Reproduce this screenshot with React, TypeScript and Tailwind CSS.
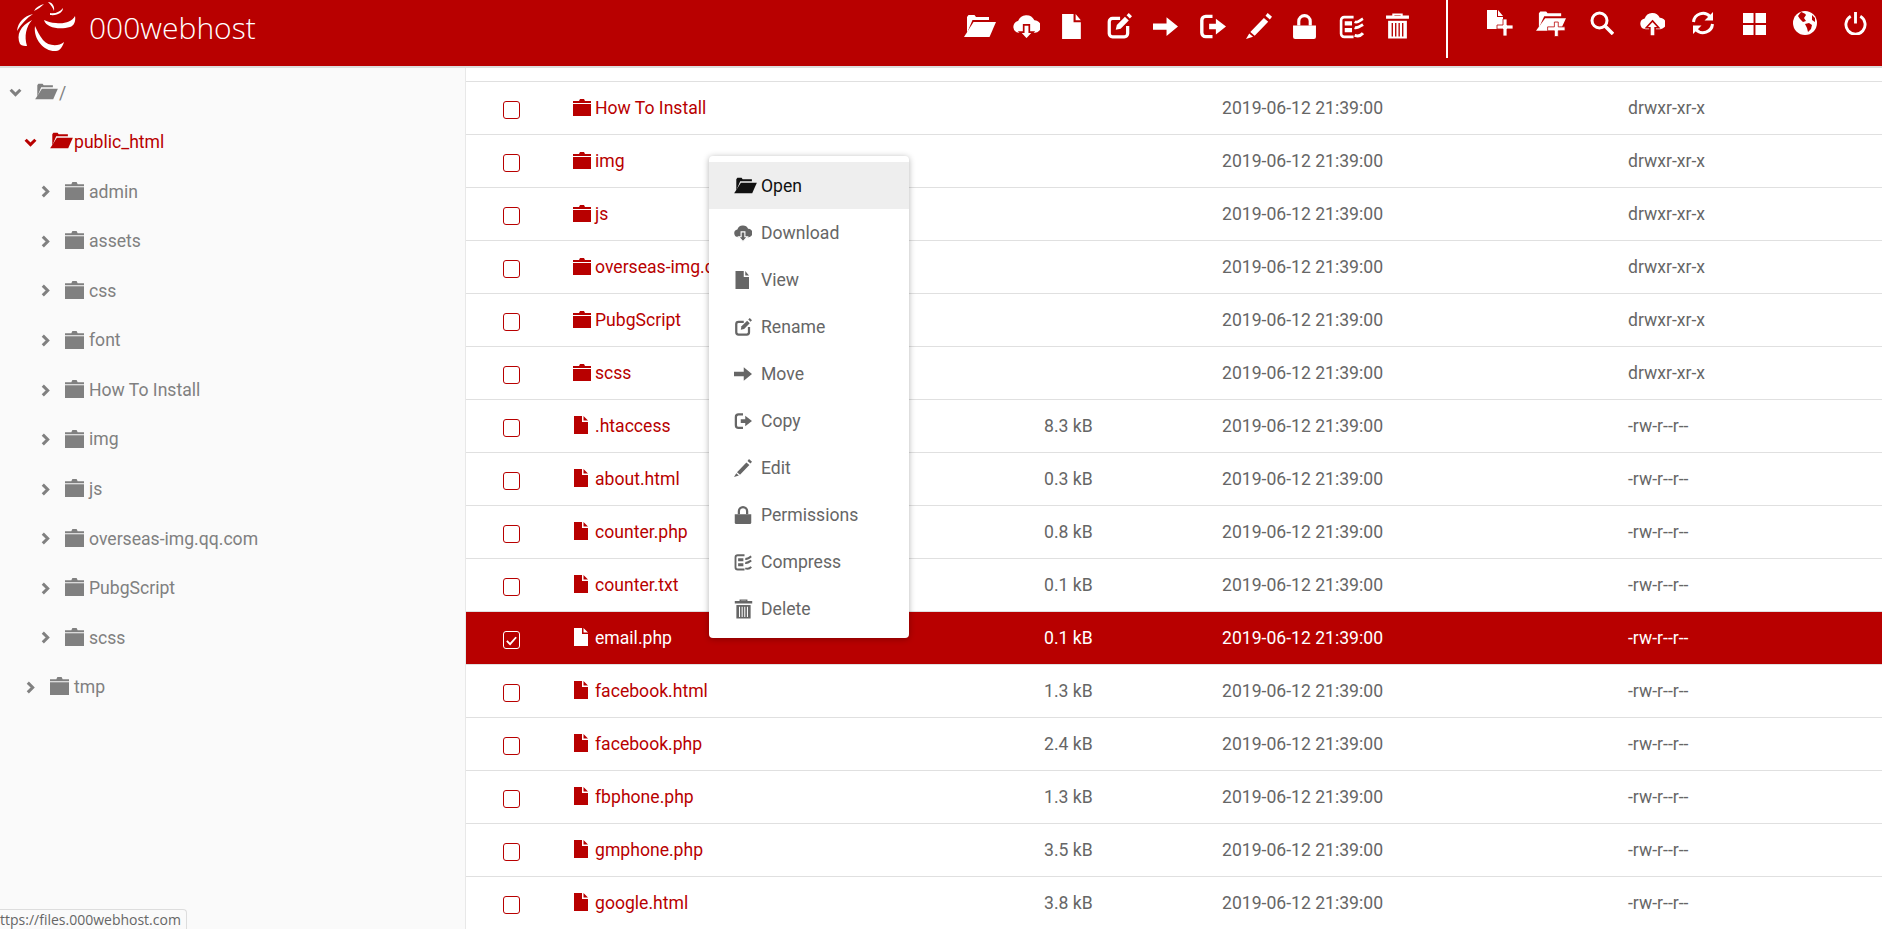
import React from "react";

const RED = "#b80000";

type IconName =
  | "folderOpen" | "cloudDown" | "file" | "edit" | "arrow" | "logout" | "pencil" | "lock" | "compress" | "trash"
  | "filePlus" | "folderPlus" | "search" | "cloudUp" | "refresh" | "grid" | "globe" | "power";

const CLOUD = "M5.500 17.500a5.200 5.200 0 0 1-1-10.300A7.800 7.800 0 0 1 19 6.500a5.500 5.500 0 0 1 .5 11z";

function Glyph({ name, cut }: { name: IconName; cut: string }) {
  switch (name) {
    case "folderOpen":
      return (
        <>
          <path d="M3 3 4.5 1h6L12 3h13v3H8.5L3 19z" fill="currentColor" />
          <path d="M9.5 8H32l-6.5 15H0z" fill="currentColor" />
        </>
      );
    case "cloudDown":
      return (
        <>
          <path d={CLOUD} fill="currentColor" />
          <path d="M9.500 10.500h5v6.500h3.500L12 23.500 6 17h3.500z" fill="currentColor" stroke={cut} strokeWidth="1.500" />
        </>
      );
    case "file":
      return <path d="M2 0h11v8h7v16H2zM15 0l5 6h-5z" fill="currentColor" />;
    case "edit":
      return (
        <>
          <path d="M13 5H6a3 3 0 0 0-3 3v11a3 3 0 0 0 3 3h11a3 3 0 0 0 3-3v-7" fill="none" stroke="currentColor" strokeWidth="3" />
          <path d="M9 15.500l1-4.500 7.500-7.500 3.500 3.500-7.500 7.500z" fill="currentColor" />
          <path d="M19 2l2-2 3 3-2 2z" fill="currentColor" />
        </>
      );
    case "arrow":
      return <path d="M0 9h13V3l11 9-11 9v-6H0z" fill="currentColor" />;
    case "logout":
      return (
        <>
          <path d="M12 3H6a3.500 3.500 0 0 0-3.500 3.500v11A3.500 3.500 0 0 0 6 21h6" fill="none" stroke="currentColor" strokeWidth="3" />
          <path d="M9 9.500h6V5l9 7-9 7v-4.500H9z" fill="currentColor" />
        </>
      );
    case "pencil":
      return <path d="M20 0l4 3.500-2 2.500-4-3.500zM16.500 4.500l4 3.500L8 21l-4-3.500zM3 19l3.500 3L0 24z" fill="currentColor" />;
    case "lock":
      return (
        <>
          <path d="M1 11h22v11a2 2 0 0 1-2 2H3a2 2 0 0 1-2-2z" fill="currentColor" />
          <path d="M6.500 11V7a5.500 5.500 0 0 1 11 0v4" fill="none" stroke="currentColor" strokeWidth="3" />
        </>
      );
    case "compress":
      return (
        <>
          <path d="M14 3H5a3 3 0 0 0-3 3v13a3 3 0 0 0 3 3h9" fill="none" stroke="currentColor" strokeWidth="2.500" />
          <path d="M5.500 7h7v4h-7zM5.500 13.500h7v4h-7z" fill="currentColor" />
          <path d="M15 7.500c3 1.500 5-1.500 8-3M15 13c3 1 5-1 8-3M15 20.500c3 1 6 .5 8-2" fill="none" stroke="currentColor" strokeWidth="2.800" />
        </>
      );
    case "trash":
      return (
        <>
          <path d="M7 2V0h10v2h6v3H1V2zM9 1.500V2h6v-.500z" fill="currentColor" fillRule="evenodd" />
          <path d="M3 7h18v17H3z" fill="currentColor" />
          <path d="M7 9v13M10.300 9v13M13.600 9v13M17 9v13" stroke={cut} strokeWidth="1.300" />
        </>
      );
    case "filePlus":
      return (
        <>
          <path d="M1 1h10v7h6v8h-5v4H1zM12 1l5 6h-5z" fill="currentColor" />
          <path d="M17 10h4v6h6v4h-6v7h-4v-7h-6v-4h6z" fill="currentColor" stroke={cut} strokeWidth="0.800" />
        </>
      );
    case "folderPlus":
      return (
        <>
          <path d="M3 4 4.500 2h6L12 4h14v3H8.500L3 19z" fill="currentColor" />
          <path d="M9.500 9H31l-6 13H0z" fill="currentColor" />
          <path d="M19 13h4v5h7v4h-7v6h-4v-6h-7v-4h7z" fill="currentColor" stroke={cut} strokeWidth="0.800" />
        </>
      );
    case "search":
      return (
        <>
          <circle cx="9.500" cy="9.500" r="7.500" fill="none" stroke="currentColor" strokeWidth="3" />
          <path d="M15 15l8 8" stroke="currentColor" strokeWidth="3.500" />
        </>
      );
    case "cloudUp":
      return (
        <>
          <path d={CLOUD} fill="currentColor" />
          <path d="M12 9.500l6 6.500h-3.500v8h-5v-8H6z" fill="currentColor" stroke={cut} strokeWidth="1.500" />
        </>
      );
    case "refresh":
      return (
        <>
          <path d="M2.500 11A9.500 9.500 0 0 1 19 5.500" fill="none" stroke="currentColor" strokeWidth="3" />
          <path d="M21.500 13A9.500 9.500 0 0 1 5 18.500" fill="none" stroke="currentColor" strokeWidth="3" />
          <path d="M22 1v8.500h-8.500zM2 23v-8.500h8.500z" fill="currentColor" />
        </>
      );
    case "grid":
      return <path d="M0 1h11v10.500H0zM13 1h11v10.500H13zM0 13.500h11V24H0zM13 13.500h11V24H13z" fill="currentColor" />;
    case "globe":
      return (
        <>
          <circle cx="12" cy="12" r="12" fill="currentColor" />
          <path d="M8 1c2 1 4 1 5 3l-2 3 2 3-3 1-3-3-2-3zM12 13l4-1 3 2-1 4-3 3-1-4zM19 4l3 3v4l-3-2z" fill={cut} />
        </>
      );
    case "power":
      return (
        <>
          <path d="M7 4.500a10 10 0 1 0 10 0" fill="none" stroke="currentColor" strokeWidth="3" />
          <path d="M12 0v12" stroke="currentColor" strokeWidth="3" />
        </>
      );
  }
}

const boxes: Partial<Record<IconName, string>> = {
  folderOpen: "0 0 32 24",
  filePlus: "0 0 28 28",
  folderPlus: "0 0 31 28",
};

function Icon({ name, cut, className }: { name: IconName; cut: string; className: string }) {
  return (
    <svg viewBox={boxes[name] ?? "0 0 24 24"} className={className}>
      <Glyph name={name} cut={cut} />
    </svg>
  );
}

function FolderClosed({ className }: { className: string }) {
  return (
    <svg viewBox="0 0 18 18" className={className}>
      <path d="M0 6h18v12H0zM0 3h6l1-2h4l1 2h6v2H0z" fill="currentColor" />
    </svg>
  );
}

function FolderOpenSmall({ className }: { className: string }) {
  return (
    <svg viewBox="0 0 32 24" className={className}>
      <Glyph name="folderOpen" cut="none" />
    </svg>
  );
}

function FileSmall({ className }: { className: string }) {
  return (
    <svg viewBox="0 0 14 18" className={className}>
      <path d="M0 0h8v6h6v12H0zM9.500 0 14 4.500H9.500z" fill="currentColor" />
    </svg>
  );
}

function Chevron({ down, className }: { down?: boolean; className: string }) {
  return (
    <svg viewBox="0 0 12 12" className={className}>
      <path d={down ? "M1.500 3.500 6 8l4.500-4.500" : "M3.500 1.500 8 6l-4.500 4.500"} fill="none" stroke="currentColor" strokeWidth="2.800" />
    </svg>
  );
}

function Logo() {
  return (
    <svg viewBox="0 0 80 55" className="w-[80px] h-[55px] shrink-0 text-white">
      <g fill="currentColor">
        <path d="M35 26C33 40 45 52 56 51C60 51 63 46 64 42C58 47 48 46 43 40C39 35 37 30 35 26z" />
        <path d="M44 20C46 28 60 30 70 27C74 26 76 21 75 16C72 22 64 24 56 23C51 23 47 21 44 20z" />
        <path d="M20 44C16 35 20 26 32 20C26 27 24 36 27 46C25 46 22 46 20 44z" />
        <path d="M17 31C18 22 24 16 33 14C27 18 21 24 17 31z" />
        <path d="M34 11C36 7 40 5 44 4C41 7 38 9 34 11z" />
        <path d="M48 2C52 2 55 6 54 11C53 8 51 5 48 2z" />
        <path d="M50 13C55 14 60 12 63 8C63 12 58 16 50 15z" />
      </g>
    </svg>
  );
}

const leftIcons: [IconName, string][] = [
  ["folderOpen", "w-[32px] h-[24px]"],
  ["cloudDown", "w-[27px] h-[27px]"],
  ["file", "w-[25px] h-[25px]"],
  ["edit", "w-[26px] h-[26px]"],
  ["arrow", "w-[25px] h-[25px]"],
  ["logout", "w-[27px] h-[27px]"],
  ["pencil", "w-[26px] h-[26px]"],
  ["lock", "w-[25px] h-[25px]"],
  ["compress", "w-[25px] h-[25px]"],
  ["trash", "w-[25px] h-[26px]"],
];

const rightIcons: [IconName, string][] = [
  ["filePlus", "w-[28px] h-[30px]"],
  ["folderPlus", "w-[30px] h-[28px]"],
  ["search", "w-[24px] h-[24px]"],
  ["cloudUp", "w-[25px] h-[25px]"],
  ["refresh", "w-[24px] h-[24px]"],
  ["grid", "w-[23px] h-[23px]"],
  ["globe", "w-[24px] h-[24px]"],
  ["power", "w-[23px] h-[23px]"],
];

const menuItems: [IconName, string][] = [
  ["folderOpen", "Open"],
  ["cloudDown", "Download"],
  ["file", "View"],
  ["edit", "Rename"],
  ["arrow", "Move"],
  ["logout", "Copy"],
  ["pencil", "Edit"],
  ["lock", "Permissions"],
  ["compress", "Compress"],
  ["trash", "Delete"],
];

const dirs = ["admin", "assets", "css", "font", "How To Install", "img", "js", "overseas-img.qq.com", "PubgScript", "scss"];

type Row = { name: string; dir?: boolean; size?: string; perm: string; selected?: boolean };

const D = "drwxr-xr-x";
const F = "-rw-r--r--";
const rows: Row[] = [
  { name: "How To Install", dir: true, perm: D },
  { name: "img", dir: true, perm: D },
  { name: "js", dir: true, perm: D },
  { name: "overseas-img.qq.com", dir: true, perm: D },
  { name: "PubgScript", dir: true, perm: D },
  { name: "scss", dir: true, perm: D },
  { name: ".htaccess", size: "8.3 kB", perm: F },
  { name: "about.html", size: "0.3 kB", perm: F },
  { name: "counter.php", size: "0.8 kB", perm: F },
  { name: "counter.txt", size: "0.1 kB", perm: F },
  { name: "email.php", size: "0.1 kB", perm: F, selected: true },
  { name: "facebook.html", size: "1.3 kB", perm: F },
  { name: "facebook.php", size: "2.4 kB", perm: F },
  { name: "fbphone.php", size: "1.3 kB", perm: F },
  { name: "gmphone.php", size: "3.5 kB", perm: F },
  { name: "google.html", size: "3.8 kB", perm: F },
];

function TableRow({ row }: { row: Row }) {
  const sel = row.selected;
  return (
    <div
      className={`grid grid-cols-[107px_471px_178px_406px_1fr] items-center h-[53.02px] border-t ${
        sel ? "bg-[#b80000] border-[#e0e0e0] text-white" : "border-[#e0e0e0] text-[#666666]"
      }`}
    >
      <div className="pl-[37px] pt-[4px]">
        <div
          className={`w-[17px] h-[18px] rounded-[3px] border-[1.5px] flex items-center justify-center ${
            sel ? "border-white" : "border-[#b80000] bg-white"
          }`}
        >
          {sel && (
            <svg viewBox="0 0 14 14" className="w-[13px] h-[13px]">
              <path d="M2 7.500 5.500 11 12 3.500" fill="none" stroke="white" strokeWidth="2" />
            </svg>
          )}
        </div>
      </div>
      <div className={`flex items-center ${sel ? "text-white" : "text-[#b80000]"}`}>
        {row.dir ? (
          <FolderClosed className="w-[18px] h-[18px] shrink-0 mb-[3px] mr-[4px]" />
        ) : (
          <FileSmall className="w-[14px] h-[18px] shrink-0 ml-[1px] mb-[3px] mr-[7px]" />
        )}
        <span>{row.name}</span>
      </div>
      <div>{row.size}</div>
      <div>2019-06-12 21:39:00</div>
      <div>{row.perm}</div>
    </div>
  );
}

function TreeRow({ pad, name, active, open, big }: { pad: string; name: string; active?: boolean; open?: boolean; big?: boolean }) {
  return (
    <div className={`flex items-center h-[49.55px] ${pad} ${active ? "text-[#b80000]" : "text-[#808080]"}`}>
      <Chevron down={open} className="w-[13px] h-[13px] shrink-0" />
      {big ? (
        <FolderOpenSmall className="w-[23px] h-[17px] shrink-0 ml-[13px] mr-[1px] mb-[3px]" />
      ) : (
        <FolderClosed className="w-[19px] h-[19px] shrink-0 ml-[13px] mr-[5px] mb-[3px]" />
      )}
      <span>{name}</span>
    </div>
  );
}

export default function App() {
  return (
    <div className="relative h-[929px] w-[1882px] overflow-hidden bg-white text-[17.6px] font-['Roboto',sans-serif]">
      <header className="relative z-10 flex h-[68px] border-b-2 border-[#dddddd] bg-[#b80000] text-white">
        <div className="flex w-[957px] items-start">
          <Logo />
          <span className="ml-[9px] mt-[7px] font-['Open_Sans',sans-serif] text-[30px] font-light leading-[42px]">000webhost</span>
        </div>
        <div className="flex h-[52px] items-center">
          {leftIcons.map(([n, c]) => (
            <div key={n} className="flex w-[46.4px] items-center justify-center">
              <Icon name={n} cut={RED} className={c} />
            </div>
          ))}
        </div>
        <div className="ml-[25px] h-[58px] w-[2px] bg-white" />
        <div className="ml-[27px] flex h-[46px] items-center">
          {rightIcons.map(([n, c]) => (
            <div key={n} className="flex w-[50.8px] items-center justify-center">
              <Icon name={n} cut={RED} className={c} />
            </div>
          ))}
        </div>
      </header>

      <div className="flex">
        <aside className="h-[861px] w-[466px] shrink-0 border-r border-[#e8e8e8] bg-[#fafafa]">
          <TreeRow pad="pl-[9px]" name="/" open big />
          <TreeRow pad="pl-[24px]" name="public_html" active open big />
          {dirs.map((d) => (
            <TreeRow key={d} pad="pl-[39px]" name={d} />
          ))}
          <TreeRow pad="pl-[24px]" name="tmp" />
        </aside>
        <main className="min-w-0 flex-1 pt-[13px]">
          {rows.map((r) => (
            <TableRow key={r.name} row={r} />
          ))}
        </main>
      </div>

      <div className="absolute left-[709px] top-[156px] z-20 w-[200px] rounded-[4px] bg-white py-[6px] shadow-[0_1px_6px_rgba(0,0,0,0.3)]">
        {menuItems.map(([n, label], i) => (
          <div
            key={label}
            className={`flex h-[47px] items-center pl-[25px] ${i === 0 ? "bg-[#eeeeee] text-[#111111]" : "text-[#666666]"}`}
          >
            <div className="flex w-[27px] shrink-0 items-center">
              <Icon
                name={n}
                cut={i === 0 ? "#eeeeee" : "white"}
                className={n === "folderOpen" ? "w-[23px] h-[17px]" : n === "trash" ? "w-[19px] h-[20px]" : "w-[18px] h-[18px]"}
              />
            </div>
            <span className="pt-[1px]">{label}</span>
          </div>
        ))}
      </div>

      <div className="absolute bottom-0 left-0 z-20 h-[20px] w-[187px] rounded-tr-[4px] border-r border-t border-[#dddddd] bg-[#fafafa] font-['Open_Sans',sans-serif] text-[14px] leading-[20px] text-[#666666]">
        ttps://files.000webhost.com
      </div>
    </div>
  );
}
